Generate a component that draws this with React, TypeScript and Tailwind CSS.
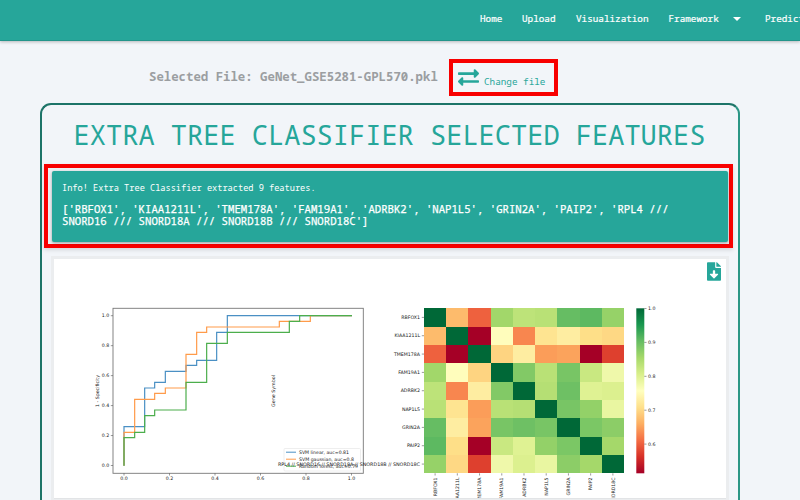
import React from "react";
import { FaExchangeAlt, FaFileDownload } from "react-icons/fa";

const genes = ["RBFOX1", "KIAA1211L", "TMEM178A", "FAM19A1", "ADRBK2", "NAP1L5", "GRIN2A", "PAIP2", "RPL4 // SNORD16 // SNORD18A // SNORD18B // SNORD18C"];
const shortGenes = ["RBFOX1", "KIAA1211L", "TMEM178A", "FAM19A1", "ADRBK2", "NAP1L5", "GRIN2A", "PAIP2", "SNORD18C"];

// Upper triangle of the symmetric correlation matrix, diagonal included.
const upper = [
  ["#006837", "#fdbb6c", "#ee613e", "#a2d76a", "#bde379", "#b9e176", "#66bd63", "#5db961", "#96d268"],
  ["#006837", "#a50026", "#fffdbc", "#f8864f", "#fee491", "#feeda1", "#fedf88", "#fed884"],
  ["#006837", "#fed481", "#feeda1", "#fb9d59", "#fba35c", "#a50026", "#de402e"],
  ["#006837", "#82c966", "#b9e176", "#78c565", "#c9e881", "#eff8aa"],
  ["#006837", "#b5df74", "#6ec064", "#dff293", "#dcf08f"],
  ["#006837", "#78c565", "#93d168", "#e9f6a1"],
  ["#006837", "#7bc765", "#8ccd67"],
  ["#006837", "#a5d86a"],
  ["#006837"],
];
const cell = (r: number, c: number) => upper[Math.min(r, c)][Math.abs(r - c)];
const CW = 200 / 9;
const CH = 165 / 9;
const ticks = ["0.0", "0.2", "0.4", "0.6", "0.8", "1.0"];

function RocCurves() {
  return (
    <g>
      <rect x="113" y="308.3" width="250.3" height="165" fill="none" stroke="#777" strokeWidth="0.9" />
      {ticks.map((t, i) => (
        <g key={t} stroke="#555" strokeWidth="0.6">
          <path d={`M${124 + i * 45.5} 473.3v2.2M113 ${465.5 - i * 29.96}h-2.2`} />
          <text x={124 + i * 45.5} y="480.2" textAnchor="middle" stroke="none">{t}</text>
          <text x="109.3" y={467.2 - i * 29.96} textAnchor="end" stroke="none">{t}</text>
        </g>
      ))}
      <text transform="translate(99 391) rotate(-90)" textAnchor="middle" textLength="32" lengthAdjust="spacingAndGlyphs">1 - Specificity</text>
      <text transform="translate(275 391) rotate(-90)" textAnchor="middle" textLength="32" lengthAdjust="spacingAndGlyphs">Gene Symbol</text>
      <g transform="translate(90 295) scale(.33333)" fill="none" strokeWidth="3.6">
        <path stroke="#4a90c4" d="M102 512V395H164V279H194V262H226V229H288V211H320V196H380V112H412V62H786" />
        <path stroke="#ff9b4a" d="M102 512V412H134V313H194V295H226V279H288V178H320V112H350V96H568V79H661V62H786" />
        <path stroke="#4cae4c" d="M102 512V428H134V412H164V362H194V345H288V262H350V145H412V112H598V79H629V62H786" />
      </g>
      <rect x="284" y="448.5" width="76.5" height="22.5" rx="1" fill="#fff" stroke="#ddd" strokeWidth="0.5" />
      <path d="M286 452.2h10" stroke="#4a90c4" />
      <path d="M286 459.2h10" stroke="#ff9b4a" />
      <path d="M286 466.2h10" stroke="#4cae4c" />
      <text x="299" y="453.9" textLength="50" lengthAdjust="spacingAndGlyphs">SVM linear, auc=0.81</text>
      <text x="299" y="460.9" textLength="55" lengthAdjust="spacingAndGlyphs">SVM gaussian, auc=0.8</text>
      <text x="299" y="467.9" textLength="59" lengthAdjust="spacingAndGlyphs">Random forest, auc=0.79</text>
    </g>
  );
}

function Heatmap() {
  return (
    <g>
      {genes.map((g, r) => (
        <g key={g}>
          {genes.map((_, c) => (
            <rect key={c} x={424 + c * CW} y={308.3 + r * CH} width={CW + 0.1} height={CH + 0.1} fill={cell(r, c)} shapeRendering="crispEdges" />
          ))}
          <path d={`M424 ${317.4 + r * CH}h-2.2M${435.1 + r * CW} 473.3v2.2`} stroke="#555" strokeWidth="0.6" />
          <text x="420" y={319 + r * CH} textAnchor="end" textLength={r === 8 ? 142 : undefined} lengthAdjust="spacingAndGlyphs">{g}</text>
          <text transform={`translate(${436.8 + r * CW} 477.5) rotate(-90)`} textAnchor="end">{shortGenes[r]}</text>
        </g>
      ))}
      <rect x="636.3" y="308.3" width="8" height="165" fill="url(#scale)" />
      {["1.0", "0.9", "0.8", "0.7", "0.6"].map((t, i) => (
        <g key={t}>
          <path d={`M644.3 ${308.5 + i * 33.9}h2.2`} stroke="#555" strokeWidth="0.6" />
          <text x="648" y={310.2 + i * 33.9}>{t}</text>
        </g>
      ))}
    </g>
  );
}

export default function App() {
  return (
    <div className="h-[500px] w-[800px] overflow-hidden bg-[#f2f5f9] font-['Noto_Sans_Mono','DejaVu_Sans_Mono',monospace] text-[#26a69a]">
      <nav className="flex h-[41px] items-center border-b border-[#23958b] bg-[#26a69a] pl-[480px] text-[9.3px] whitespace-nowrap text-white shadow-[0_1px_3px_rgba(0,0,0,0.25)]">
        <div className="flex shrink-0 items-center pb-[2px] [-webkit-text-stroke:0.2px_white]">
          <span className="w-[42px]">Home</span>
          <span className="w-[54px]">Upload</span>
          <span className="w-[92.5px]">Visualization</span>
          <span className="w-[64.5px]">Framework</span>
          <svg className="mr-[24px] h-[4px] w-[8px]" viewBox="0 0 8 4"><path d="M0 0h8L4 4z" fill="white" /></svg>
          <span>Prediction</span>
        </div>
      </nav>

      <div className="flex h-[62px] items-start pt-[18px] pl-[149px]">
        <div className="mt-[10px] w-[300px] text-[12.35px] leading-[16px] font-bold whitespace-nowrap text-[#9b9ea1]">Selected File: GeNet_GSE5281-GPL570.pkl</div>
        <div className="flex h-[37px] w-[109px] items-start border-4 border-[#f80000] pt-[4px] pl-[5px]">
          <FaExchangeAlt className="h-[21px] w-[21px]" />
          <span className="mt-[8px] ml-[5px] text-[9.3px] leading-[14px] whitespace-nowrap">Change file</span>
        </div>
      </div>

      <main className="ml-[40px] h-[420px] w-[700px] rounded-t-[11px] border-2 border-t-[#1d7468] border-r-[#2b9685] border-l-[#1d7468] px-[2px]">
        <h1 className="-ml-[1px] h-[59px] pt-[13px] text-center text-[27px] leading-[34px] whitespace-nowrap">EXTRA TREE CLASSIFIER SELECTED FEATURES</h1>
        <section className="h-[84px] w-[689px] border-4 border-[#f80000] bg-[#edf0f3] pt-[3px] pr-[1px] pl-[4px] shadow-[0_2px_4px_rgba(0,0,0,0.12)]">
          <div className="h-[71px] rounded-[2px] bg-[#26a69a] px-[10px] pt-[10px] text-white shadow-[0_1px_3px_rgba(0,0,0,0.35)]">
            <p className="text-[8.65px] leading-[14px]">Info! Extra Tree Classifier extracted 9 features.</p>
            <p className="mt-[8px] text-[10.65px] leading-[12.3px] whitespace-nowrap [-webkit-text-stroke:0.25px_white]">['RBFOX1', 'KIAA1211L', 'TMEM178A', 'FAM19A1', 'ADRBK2', 'NAP1L5', 'GRIN2A', 'PAIP2', 'RPL4 ///<br />SNORD16 /// SNORD18A /// SNORD18B /// SNORD18C']</p>
          </div>
        </section>
        <section className="relative mt-[8px] ml-[7px] h-[245px] w-[678px] border-[3px] border-[#ebedef] bg-white">
          <svg className="block h-[240px] w-[672px] border-b border-[#e2e4e6] font-['DejaVu_Sans',sans-serif]" viewBox="54 259 672 239" fontSize="4.7" fill="#222">
            <defs>
              <linearGradient id="scale" x1="0" y1="0" x2="0" y2="1">
                <stop offset="0" stopColor="#006837" />
                <stop offset=".1" stopColor="#1a9850" />
                <stop offset=".2" stopColor="#66bd63" />
                <stop offset=".3" stopColor="#a6d96a" />
                <stop offset=".4" stopColor="#d9ef8b" />
                <stop offset=".5" stopColor="#ffffbf" />
                <stop offset=".6" stopColor="#fee08b" />
                <stop offset=".7" stopColor="#fdae61" />
                <stop offset=".8" stopColor="#f46d43" />
                <stop offset=".9" stopColor="#d73027" />
                <stop offset="1" stopColor="#a50026" />
              </linearGradient>
            </defs>
            <RocCurves />
            <Heatmap />
          </svg>
          <FaFileDownload className="absolute top-[3px] right-[5px] h-[19px] w-[14px]" />
        </section>
      </main>
    </div>
  );
}
